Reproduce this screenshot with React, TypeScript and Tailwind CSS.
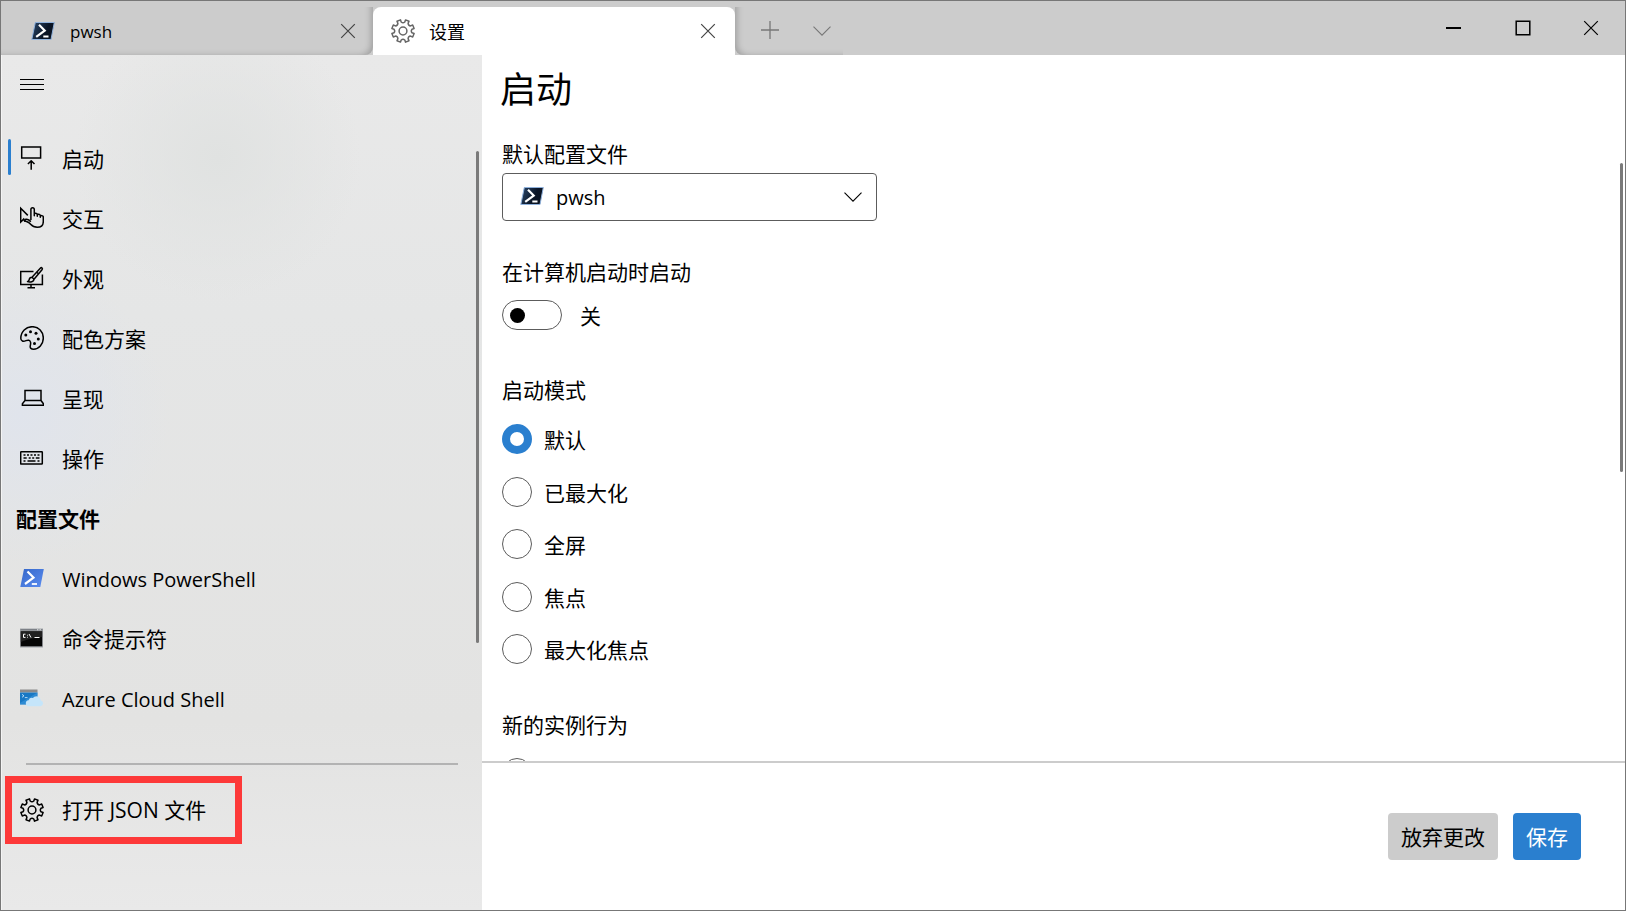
import React, { useState } from "react";

type IconProps = { className?: string };

const GEAR =
  "M9.5 .9 L10.2 3 Q12 4.4 13.8 3 L14.5 .9 L18 2.3 L17.1 4.4 Q17.3 6.7 19.6 6.9 L21.7 6 L23.1 9.5 L21 10.2 Q19.6 12 21 13.8 L23.1 14.5 L21.7 18 L19.6 17.1 Q17.3 17.3 17.1 19.6 L18 21.7 L14.5 23.1 L13.8 21 Q12 19.6 10.2 21 L9.5 23.1 L6 21.7 L6.9 19.6 Q6.7 17.3 4.4 17.1 L2.3 18 L.9 14.5 L3 13.8 Q4.4 12 3 10.2 L.9 9.5 L2.3 6 L4.4 6.9 Q6.7 6.7 6.9 4.4 L6 2.3 Z";

function Line({ className = "", children }: IconProps & { children: React.ReactNode }) {
  return (
    <svg viewBox="0 0 24 24" fill="none" stroke="currentColor" strokeWidth="1.5" strokeLinejoin="round" aria-hidden="true" className={`size-6 shrink-0 ${className}`}>
      {children}
    </svg>
  );
}

const GearIcon = ({ className }: IconProps) => (
  <Line className={className}>
    <path d={GEAR} />
    <circle cx="12" cy="12" r="3.9" />
  </Line>
);

const StartupIcon = () => (
  <Line>
    <path d="M1.7 .9H20.6V12H1.7Z" strokeLinejoin="miter" />
    <path d="M11.2 23.8V15M7.9 18l3.3-3.2L14.5 18" />
  </Line>
);

const InteractionIcon = () => (
  <Line>
    <path d="M7.8 9.4.7 2.2V16l3-2.9 1.2 2.6" strokeLinejoin="miter" />
    <path d="M10.9 14V3.6c0-2.6 3.4-2.6 3.4 0v6.2-1.6c.2-1.4 3-1.2 3 .6v1.4-1c.2-1.4 3-1.2 3 .6v1.4-.6c.2-1.5 3-1.3 3 .6v4.2c0 3.6-2.2 5.9-6 5.9-3.4 0-5-1-6.4-2.7-1.5-1.8-2.5-2.6-4.5-3-2.4-.5-1.8-2.6.3-2.3 1.600.2 2.700.8 4.200 2.300" />
  </Line>
);

const AppearanceIcon = () => (
  <Line>
    <path d="M13.500 5.600H.7V18.400H22.400V8.500M11 18.500v3.200M7.500 21.800h7.500" strokeLinejoin="miter" />
    <path d="M12 11.300 20.300 2.200c1.300-1.300 2.800.1 1.700 1.500L14 13.200zM12 11.300c-1.800 0-2.600 1-2.800 2.300-.1 1-.6 1.600-1.700 2 2.800 1 6.500 0 6.500-2.400M17 6.500l1.700 1.500" />
  </Line>
);

const PaletteIcon = () => (
  <Line>
    <path d="M.8 12.300C.8 5.500 6 .7 12.200.7c6.500 0 11.100 5 11.100 11.200 0 6.600-4.600 11.300-9.700 11.300-2.300 0-3.900-1-3.300-3.600.3-1.200.6-2.600.1-3.900-.6-1.700-2.300-1.900-4.400-1.100-2.800 1.100-5.200.7-5.200-2.300z" />
    <g fill="currentColor" stroke="none">
      <circle cx="5.800" cy="9" r="1.500" />
      <circle cx="10.500" cy="5.800" r="1.500" />
      <circle cx="16" cy="7.200" r="1.500" />
      <circle cx="18.300" cy="13" r="1.500" />
      <circle cx="14.500" cy="17.600" r="1.500" />
    </g>
  </Line>
);

const LaptopIcon = () => (
  <Line>
    <path d="M5 14.500V4.600h16v9.900zM5 14.500l-2.600 3.200v1.600h21v-1.600L21 14.500" strokeLinejoin="miter" />
  </Line>
);

const KeyboardIcon = () => (
  <Line>
    <rect x=".7" y="5.700" width="21.600" height="12.400" rx="0.600" />
    <path d="M3.500 9h2M7 9h2M10.500 9h2M14 9h2M17.500 9h2M3.500 12h3.200M8.700 12h2M12.200 12h2M15.800 12h3.700M3.500 15h2M7.500 15h8M17.500 15h2" />
  </Line>
);

const PwshIcon = ({ className = "" }: IconProps) => (
  <svg viewBox="0 0 24 24" aria-hidden="true" className={`size-6 shrink-0 ${className}`}>
    <defs>
      <linearGradient id="pwshFill" x1="0" y1="0" x2="1" y2="0.400">
        <stop offset="0" stopColor="#2c4a6e" />
        <stop offset="0.700" stopColor="#0a1526" />
        <stop offset="1" stopColor="#0a1322" />
      </linearGradient>
    </defs>
    <path d="M4.300 3.500H23.300L20 20.500H.8Z" fill="url(#pwshFill)" stroke="#8fb1dc" strokeWidth="1" strokeLinejoin="round" />
    <path d="M8 5.800 13.700 11.600 5.200 17.800" fill="none" stroke="#fff" strokeWidth="2.200" />
    <path d="M12.300 17.500H17.500" stroke="#fff" strokeWidth="2" />
  </svg>
);

const PowerShellIcon = () => (
  <svg viewBox="0 0 24 24" aria-hidden="true" className="size-6 shrink-0">
    <defs>
      <linearGradient id="psFill" x1="0" y1="0" x2="1" y2="1">
        <stop offset="0" stopColor="#3567c9" />
        <stop offset="1" stopColor="#5b8df0" />
      </linearGradient>
    </defs>
    <path d="M4 3H23.800L20.300 21H.3Z" fill="url(#psFill)" />
    <path d="M7.500 5.500 13.500 11.600 5 18" fill="none" stroke="#fff" strokeWidth="2.200" />
    <path d="M11.800 18H17" stroke="#fff" strokeWidth="1.800" />
  </svg>
);

const CmdIcon = () => (
  <svg viewBox="0 0 24 24" aria-hidden="true" className="size-6 shrink-0">
    <path d="M0 2.500H23V21.500H0Z" fill="#a3a6aa" />
    <path d="M.5 3H22.500V4.500H.5Z" fill="#7c8086" />
    <path d="M17 3.200h1.400v1H17zM19.500 3.200h1.400v1h-1.400z" fill="#e4e6e8" />
    <path d="M.7 5.200H22.200V20.300H.7Z" fill="#050505" />
    <path d="M.7 5.200H22.200V11Q10 12 .7 16Z" fill="#333" opacity=".6" />
    <path d="M5.500 8.200H3.500V11.400H5.500M7.500 8.800v.8M7.500 10.800v.8M9 8l2 3.600M14.500 11.500H19.500" fill="none" stroke="#fff" strokeWidth="1" />
  </svg>
);

const AzureIcon = () => (
  <svg viewBox="0 0 24 24" aria-hidden="true" className="size-6 shrink-0">
    <path d="M0 3.500H17.500V6.500H0Z" fill="#8b8b8b" />
    <path d="M0 6.500H17.500V18.500H0Z" fill="#1878c4" />
    <path d="M17.500 6.500V9L6 18.500H0V17Z" fill="#3f9be0" opacity=".55" />
    <path d="M2 8.300 4 9.800 2 11.300M4.800 11.600H7.500" fill="none" stroke="#d7efff" strokeWidth=".8" />
    <path d="M9 20.300a3 3 0 0 1-.4-6 3.600 3.600 0 0 1 4.300-2.300 4.500 4.500 0 0 1 8 2.400 3.100 3.100 0 0 1 0 5.900Z" fill="#c5e5fa" />
  </svg>
);

const CloseIcon = () => (
  <svg viewBox="0 0 16 16" fill="none" stroke="currentColor" strokeWidth="1.200" aria-hidden="true" className="size-4">
    <path d="M1.200 1.200 14.800 14.800M14.800 1.200 1.200 14.800" />
  </svg>
);

const ChevronIcon = ({ className = "" }: IconProps) => (
  <svg viewBox="0 0 18 10" fill="none" stroke="currentColor" strokeWidth="1.100" aria-hidden="true" className={`h-[10px] w-[18px] ${className}`}>
    <path d="M.5.700 9 9.200 17.500.700" />
  </svg>
);

type Entry = { label: string; icon: React.ReactNode; latin?: boolean };

const settingsPages: Entry[] = [
  { label: "启动", icon: <StartupIcon /> },
  { label: "交互", icon: <InteractionIcon /> },
  { label: "外观", icon: <AppearanceIcon /> },
  { label: "配色方案", icon: <PaletteIcon /> },
  { label: "呈现", icon: <LaptopIcon /> },
  { label: "操作", icon: <KeyboardIcon /> },
];

const profiles: Entry[] = [
  { label: "Windows PowerShell", icon: <PowerShellIcon />, latin: true },
  { label: "命令提示符", icon: <CmdIcon /> },
  { label: "Azure Cloud Shell", icon: <AzureIcon />, latin: true },
];

const launchModes = ["默认", "已最大化", "全屏", "焦点", "最大化焦点"];

const RADIO =
  "size-[30px] shrink-0 appearance-none rounded-full border border-[#5c5c5c] bg-white checked:border-8 checked:border-[#2a7fcf]";

function NavItem({ entry, active, onSelect }: { entry: Entry; active: boolean; onSelect: () => void }) {
  return (
    <button type="button" onClick={onSelect} aria-current={active ? "page" : undefined} className="flex h-[60px] w-full items-center pl-1.5 text-left">
      <span className={`mb-0.5 h-9 w-[3px] rounded-full ${active ? "bg-[#2a7fcf]" : ""}`} />
      <span className="ml-[9px]">{entry.icon}</span>
      <span className={`ml-[18px] pt-[3px] ${entry.latin ? "text-xl" : ""}`}>{entry.label}</span>
    </button>
  );
}

function TitleBar() {
  return (
    <header className="flex h-[54px] shrink-0 bg-[#cccccc]">
      <div className="flex min-w-0 pt-1.5">
        <div className="flex w-[372px] items-center rounded-br-lg pr-[17px] pl-[30px] shadow-[inset_-6px_-3px_6px_-4px_#00000038]">
          <PwshIcon />
          <span className="ml-[15px] flex-1 pt-0.5 text-[17px]">pwsh</span>
          <button type="button" aria-label="关闭 pwsh" className="text-[#444]"><CloseIcon /></button>
        </div>
        <div className="flex w-[362px] items-center rounded-t-lg bg-white pr-[19px] pl-[18px] text-lg">
          <GearIcon className="text-[#666]" />
          <span className="ml-[14px] flex-1 pt-0.5">设置</span>
          <button type="button" aria-label="关闭设置" className="text-[#444]"><CloseIcon /></button>
        </div>
        <div className="flex w-[108px] items-center justify-between rounded-bl-lg pr-3 pl-[26px] text-[#777] shadow-[inset_6px_-3px_6px_-4px_#00000038]">
          <button type="button" aria-label="新建标签页" className="pb-0.5">
            <svg viewBox="0 0 18 18" stroke="currentColor" strokeWidth="1.300" aria-hidden="true" className="size-[18px]">
              <path d="M9 0V18M0 9H18" />
            </svg>
          </button>
          <button type="button" aria-label="新建标签页下拉列表"><ChevronIcon /></button>
        </div>
      </div>
      <div className="ml-auto flex">
        <button type="button" aria-label="最小化" className="grid w-[69px] place-items-center">
          <span className="h-0.5 w-[15px] bg-black" />
        </button>
        <button type="button" aria-label="最大化" className="grid w-[69px] place-items-center">
          <svg viewBox="0 0 16 16" fill="none" stroke="currentColor" strokeWidth="1.500" aria-hidden="true" className="size-4">
            <path d="M1.200 1.200H14.800V14.800H1.200Z" />
          </svg>
        </button>
        <button type="button" aria-label="关闭" className="grid w-[68px] place-items-center"><CloseIcon /></button>
      </div>
    </header>
  );
}

function Sidebar() {
  const [page, setPage] = useState("启动");
  const item = (entry: Entry) => (
    <NavItem key={entry.label} entry={entry} active={entry.label === page} onSelect={() => setPage(entry.label)} />
  );
  return (
    <aside className="flex w-[481px] shrink-0 flex-col border-l border-[#f4f4f4] bg-[#e6e6e6] bg-[radial-gradient(circle_at_45%_12%,#e0e2e1_0,transparent_18%),radial-gradient(circle_at_4%_42%,#e0e4ec_0,transparent_22%),linear-gradient(180deg,#e9e9e9_0%,#e5e6e6_30%,#e3e3e2_78%,#e9e9e9_100%)]">
      <div className="flex h-[73px] shrink-0 items-center pl-[18px]">
        <button type="button" aria-label="菜单" className="flex w-6 flex-col gap-1 pb-3.5">
          <span className="h-px bg-black" />
          <span className="h-px bg-black" />
          <span className="h-px bg-black" />
        </button>
      </div>
      <div className="relative min-h-0 flex-1">
        <nav className="h-full overflow-hidden">
          {settingsPages.map(item)}
          <h2 className="flex h-[60px] items-center pt-[3px] pl-3.5 font-bold">配置文件</h2>
          {profiles.map(item)}
        </nav>
        <span className="absolute top-[23px] right-[3px] h-[492px] w-[3px] rounded-full bg-[#7a7a7a]" />
      </div>
      <div className="h-[147px] shrink-0">
        <hr className="mr-6 ml-6 border-t-2 border-[#b3b3b3]" />
        <button type="button" className="mt-[11px] ml-[3px] flex h-[68px] w-[237px] items-center border-[7px] border-[#fd3939] pl-2 text-left">
          <GearIcon />
          <span className="ml-[18px] pt-0.5">打开 JSON 文件</span>
        </button>
      </div>
    </aside>
  );
}

function StartupSettings() {
  const [mode, setMode] = useState("默认");
  return (
    <main className="flex min-w-0 flex-1 flex-col bg-white">
      <div className="relative min-h-0 flex-1">
        <div className="h-full overflow-hidden pl-5">
          <h1 className="-ml-0.5 pt-[11px] text-4xl leading-[48px]">启动</h1>
          <div className="mt-[25px] flex flex-col items-start">
            <label htmlFor="profile" className="leading-[30px]">默认配置文件</label>
            <div className="relative mt-1 w-[375px] max-w-full">
              <select id="profile" defaultValue="pwsh" className="h-12 w-full appearance-none rounded border border-[#5c5c5c] bg-white pt-0.5 pl-[53px] text-xl">
                <option>pwsh</option>
                <option>Windows PowerShell</option>
              </select>
              <PwshIcon className="pointer-events-none absolute top-[11px] left-[18px]" />
              <ChevronIcon className="pointer-events-none absolute top-[19px] right-[15px]" />
            </div>
          </div>
          <div className="mt-9 flex flex-col items-start">
            <label htmlFor="autostart" className="leading-[30px]">在计算机启动时启动</label>
            <div className="mt-[13px] flex items-center gap-[18px]">
              <input
                id="autostart"
                type="checkbox"
                role="switch"
                className="flex h-[30px] w-[60px] appearance-none items-center rounded-full border border-[#5c5c5c] bg-white px-[7px] before:size-[15px] before:rounded-full before:bg-black checked:justify-end"
              />
              <span className="pt-0.5 leading-7">关</span>
            </div>
          </div>
          <fieldset className="mt-[45px]">
            <legend className="leading-[30px]">启动模式</legend>
            <div className="mt-[19px] flex h-60 flex-col justify-between">
              {launchModes.map((m) => (
                <label key={m} className="flex items-center gap-3 leading-7">
                  <input type="radio" name="mode" checked={m === mode} onChange={() => setMode(m)} className={RADIO} />
                  <span className="pt-0.5">{m}</span>
                </label>
              ))}
            </div>
          </fieldset>
          <fieldset className="mt-[46px]">
            <legend className="leading-[30px]">新的实例行为</legend>
            <input type="radio" name="instance" aria-label="新建窗口" className={`mt-[18px] ${RADIO}`} />
          </fieldset>
        </div>
        <span className="absolute top-[108px] right-0.5 h-[309px] w-[3px] rounded-full bg-[#7a7a7a]" />
      </div>
      <footer className="flex h-[149px] shrink-0 items-center justify-end gap-[15px] border-t-2 border-[#cccccc] pr-11">
        <button type="button" className="h-[47px] rounded bg-[#cccccc] px-[13px] pt-0.5">放弃更改</button>
        <button type="button" className="h-[47px] rounded bg-[#2a7fcf] px-[13px] pt-0.5 text-white">保存</button>
      </footer>
    </main>
  );
}

export default function App() {
  return (
    <div className="flex h-screen flex-col overflow-hidden border border-[#777] bg-white font-['Open_Sans','Noto_Sans_CJK_SC',sans-serif] text-[21px] text-black">
      <TitleBar />
      <div className="flex min-h-0 flex-1">
        <Sidebar />
        <StartupSettings />
      </div>
    </div>
  );
}
